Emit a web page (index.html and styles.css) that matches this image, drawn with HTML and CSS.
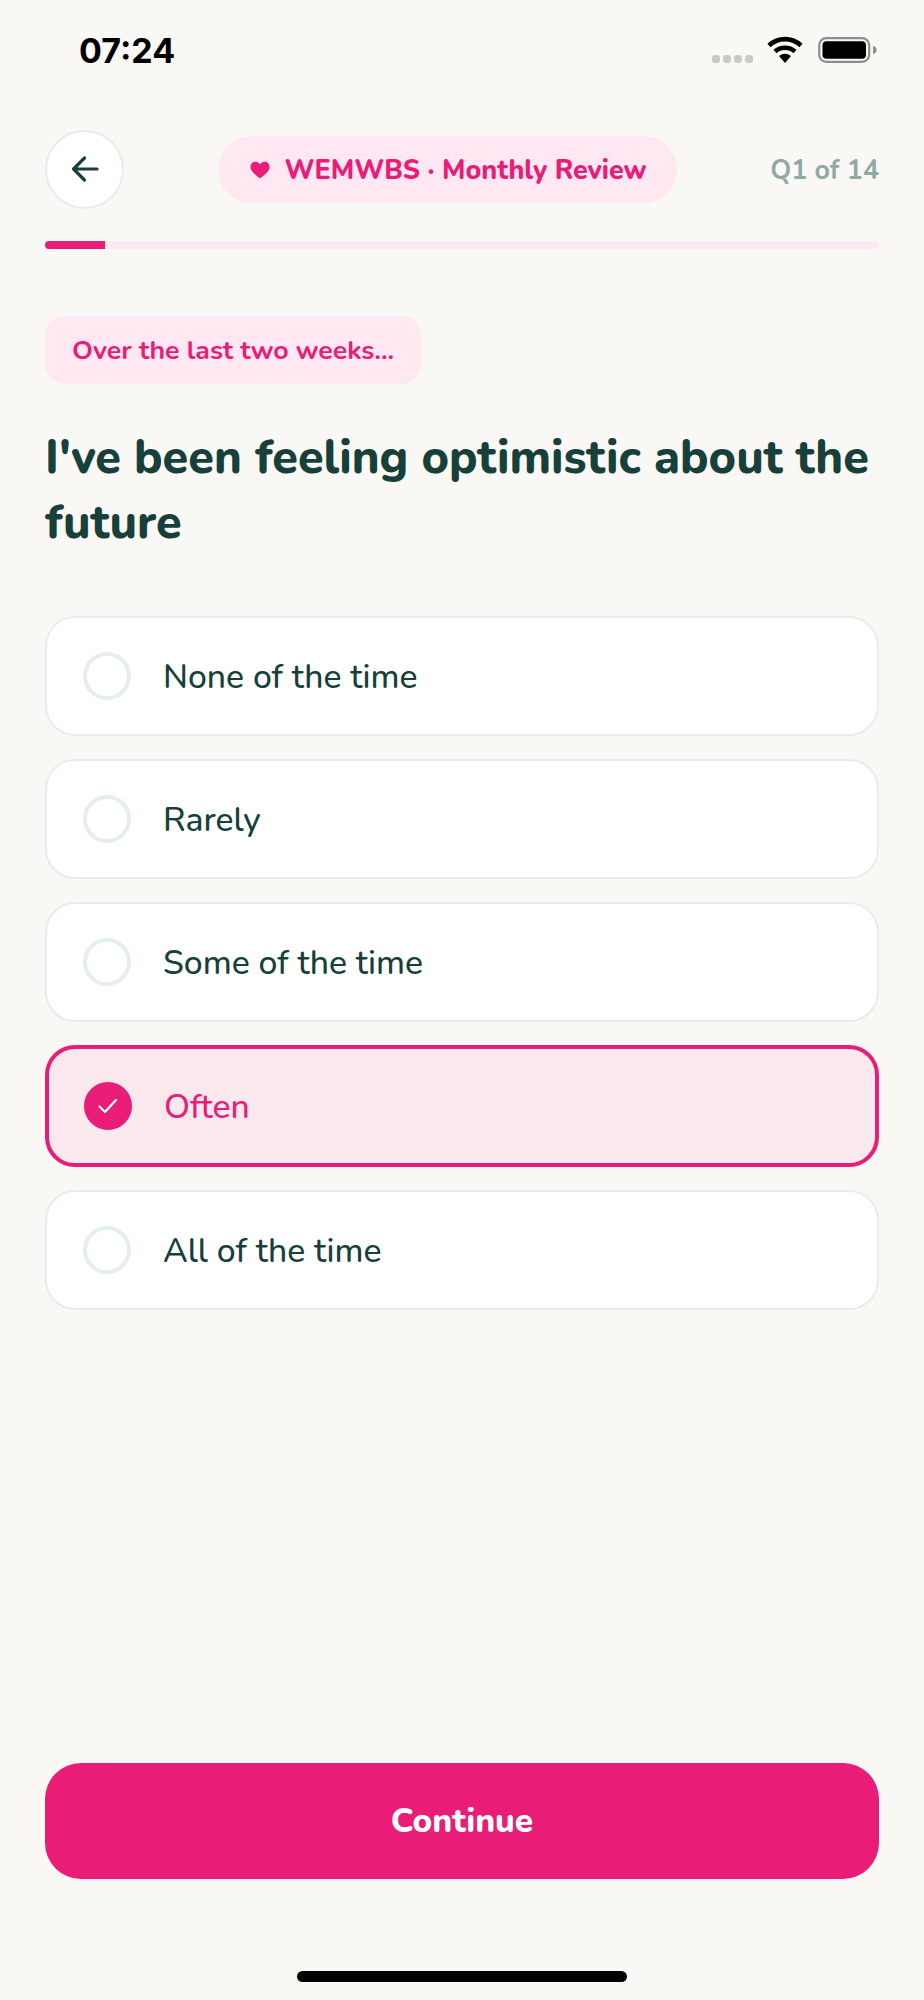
FILE: index.html
```html
<!DOCTYPE html>
<html lang="en">
<head>
<meta charset="utf-8">
<title>WEMWBS Monthly Review</title>
<link rel="stylesheet" href="styles.css">
</head>
<body>
<div class="screen">
  <div class="status">
    <span class="time">07:24</span>
    <div class="status-icons">
      <div class="dots"><i></i><i></i><i></i><i></i></div>
      <svg class="wifi" width="36" height="27" viewBox="0 0 36 27"><path d="M2 9.500C11 1 25 1 34 9.500" fill="none" stroke="#000" stroke-width="4.600"/><path d="M8 15.500C13.500 10.500 22.500 10.500 28 15.500" fill="none" stroke="#000" stroke-width="4.600"/><path d="M12 20 Q18 15.500 24 20 L18 27Z" fill="#000"/></svg>
      <svg class="battery" width="59" height="26" viewBox="0 0 59 26"><rect x="1.200" y="1.200" width="50" height="23.600" rx="7" fill="none" stroke="#8e8e8e" stroke-width="2.200"/><rect x="4.500" y="4.300" width="43.500" height="17.400" rx="4" fill="#000"/><path d="M55 9c2.400 .6 3.600 2 3.600 4s-1.200 3.400-3.600 4z" fill="#8e8e8e"/></svg>
    </div>
  </div>

  <div class="header">
    <button class="back">
      <svg width="32" height="32" viewBox="0 0 32 32"><path d="M28 16H5M15.500 5 4.500 16l11 11" fill="none" stroke="#17403a" stroke-width="3.200" stroke-linecap="round" stroke-linejoin="round"/></svg>
    </button>
    <div class="pill">
      <svg width="20" height="18" viewBox="0 0 20 18"><path d="M10 17.500C5 13.500.5 10.500.5 5.800.5 2.800 2.800.7 5.400.7 7.300.7 9 1.700 10 3.500 11 1.700 12.700.7 14.600.7c2.600 0 4.900 2.100 4.900 5.100 0 4.700-4.500 7.700-9.500 11.700z" fill="#e91c78"/></svg>
      <span>WEMWBS · Monthly Review</span>
    </div>
    <span class="count">Q1 of 14</span>
  </div>

  <div class="progress"><div class="fill"></div></div>

  <div class="tag">Over the last two weeks...</div>
  <h1 class="question">I've been feeling optimistic about the future</h1>

  <div class="options">
    <div class="option"><span class="radio"></span><span class="label">None of the time</span></div>
    <div class="option"><span class="radio"></span><span class="label">Rarely</span></div>
    <div class="option"><span class="radio"></span><span class="label">Some of the time</span></div>
    <div class="option selected">
      <span class="radio">
        <svg width="24" height="20" viewBox="0 0 24 20"><path d="M3.500 10.500 9 16 20 4" fill="none" stroke="#fff" stroke-width="2.200" stroke-linecap="round" stroke-linejoin="round"/></svg>
      </span>
      <span class="label">Often</span>
    </div>
    <div class="option"><span class="radio"></span><span class="label">All of the time</span></div>
  </div>

  <button class="continue">Continue</button>
  <div class="home"></div>
</div>
</body>
</html>
```
FILE: styles.css
```css
* { box-sizing: border-box; }
html, body { margin: 0; padding: 0; }
body { background: #faf8f5; font-family: "Nunito", "Noto Sans", "Open Sans", sans-serif; color: #17403a; }
.screen { width: 924px; height: 2000px; padding: 0 45px; display: flex; flex-direction: column; }

.status { height: 130px; padding: 32px 2px 0 34px; display: flex; justify-content: space-between; align-items: flex-start; flex: none; }
.time { font-family: Inter, sans-serif; font-weight: 700; font-size: 34px; line-height: 38px; color: #000; }
.status-icons { display: flex; align-items: flex-start; margin-top: 4px; }
.dots { display: flex; gap: 3px; margin: 19px 14px 0 0; }
.dots i { width: 8px; height: 8px; border-radius: 3px; background: #c9c9c7; display: block; }
.wifi { margin-right: 15px; }
.battery { margin-top: 1px; }

.header { height: 78px; display: flex; align-items: center; flex: none; }
.back { width: 79px; height: 79px; border-radius: 50%; background: #fff; border: 2px solid #e6eeec; padding: 0; display: flex; align-items: center; justify-content: center; }
.pill { height: 67px; width: 459px; margin-left: 94px; border-radius: 34px; background: #ffe8f2; display: flex; align-items: center; justify-content: center; gap: 15px; color: #e91c78; font-weight: 800; font-size: 26.800px; line-height: 36px; padding: 1px 0 0 1px; }
.count { margin-left: auto; font-size: 26.800px; line-height: 36px; padding-top: 2px; font-weight: 700; color: #8fa9a5; }

.progress { height: 8px; margin-top: 33px; border-radius: 4px; background: #ffe8f2; overflow: hidden; flex: none; }
.fill { width: 60px; height: 100%; background: #e91c78; }

.tag { align-self: flex-start; margin-top: 67px; height: 68px; padding: 0 27px; display: flex; align-items: center; border-radius: 20px; background: #ffe8f2; color: #e91c78; font-size: 26.700px; font-weight: 700; }
.question { margin: 42px 0 0; font-size: 46.800px; line-height: 65px; font-weight: 800; color: #17403a; }

.options { margin-top: 60px; display: flex; flex-direction: column; gap: 23px; }
.option { height: 120px; padding: 0 36px; display: flex; align-items: center; gap: 32px; background: #fff; border: 2px solid #e6eeec; border-radius: 30px; font-size: 33.700px; font-weight: 500; color: #17403a; }
.label { padding-top: 1px; }
.radio { width: 48px; height: 48px; flex: none; border-radius: 50%; border: 4px solid #e6eeec; display: flex; align-items: center; justify-content: center; }
.selected { height: 122px; padding: 0 35px; background: #f9e9ed; border: 4px solid #e91c78; color: #e91c78; }
.selected .radio { background: #e91c78; border-color: #e91c78; }

.continue { margin-top: auto; height: 116px; flex: none; border: 0; border-radius: 36px; background: #e91c78; color: #fff; font-family: inherit; font-size: 33.500px; font-weight: 800; padding-top: 1px; }
.home { width: 330px; height: 11px; margin: 92px auto 18px; flex: none; border-radius: 6px; background: #000; }
```
